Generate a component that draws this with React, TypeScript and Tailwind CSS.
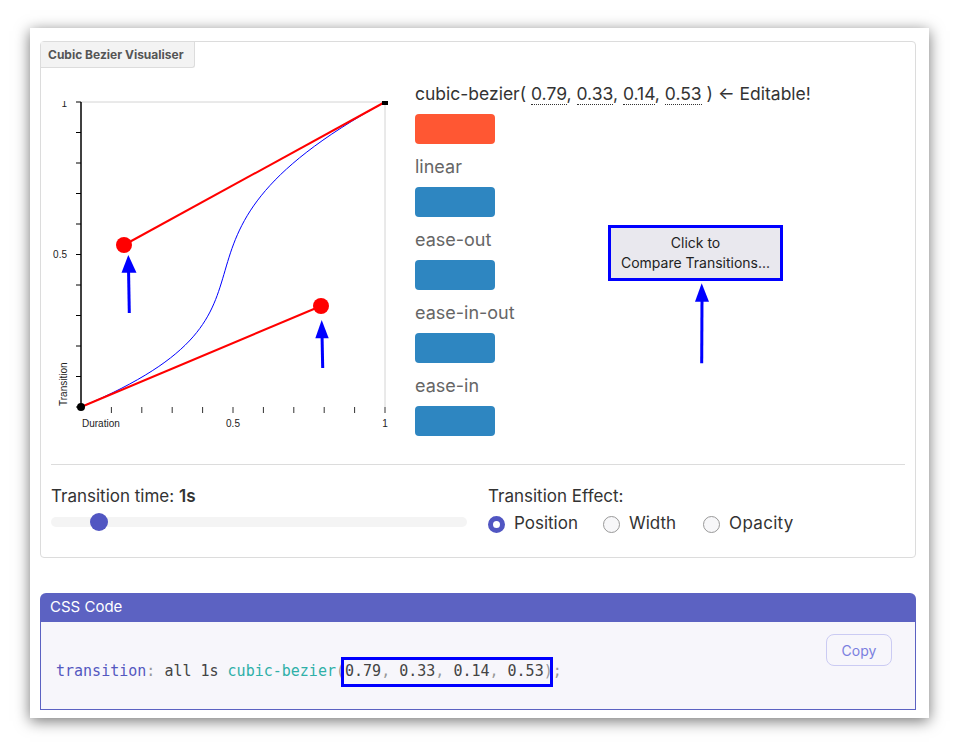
import React from "react";

const sans = { fontFamily: "Inter, 'Open Sans', sans-serif" };

const vals = ["0.79", "0.33", "0.14", "0.53"];
const easings = ["linear", "ease-out", "ease-in-out", "ease-in"];

function Chart() {
    // drawn in page coordinates, shifted back by the svg's own offset
    const yTicks = Array.from({ length: 11 }, (_, i) => 102 + i * 30.5);
    const xTicks = Array.from({ length: 10 }, (_, i) => 81 + (i + 1) * 30.4);
    return (
        <svg width="359" height="340" className="block" style={{ fontFamily: "'Liberation Sans', Arial, sans-serif" }}>
            <g transform="translate(-41,-101)">
                <line x1="81" y1="102" x2="385" y2="102" stroke="#d4d4d4" />
                <line x1="385" y1="102" x2="385" y2="407" stroke="#d4d4d4" />
                <line x1="81" y1="102" x2="81" y2="407" stroke="#000" strokeWidth="1.5" />
                {yTicks.map((y) => (
                    <line key={y} x1="76" y1={y} x2="81" y2={y} stroke="#000" />
                ))}
                {xTicks.map((x) => (
                    <line key={x} x1={x} y1="407" x2={x} y2="413" stroke="#333" />
                ))}
                <text x="67" y="107" fontSize="10" textAnchor="end" fill="#222">1</text>
                <text x="67" y="258" fontSize="10" textAnchor="end" fill="#222">0.5</text>
                <text x="82" y="427" fontSize="10" fill="#222">Duration</text>
                <text x="233" y="427" fontSize="10" textAnchor="middle" fill="#222">0.5</text>
                <text x="385" y="427" fontSize="10" textAnchor="middle" fill="#222">1</text>
                <text transform="translate(67,406) rotate(-90)" fontSize="10" fill="#222">Transition</text>

                <path d="M81,407 C321,306 124,245 385,102" fill="none" stroke="#0000ff" strokeWidth="1" />
                <line x1="81" y1="407" x2="321" y2="306" stroke="#ff0000" strokeWidth="2" />
                <line x1="124" y1="245" x2="385" y2="102" stroke="#ff0000" strokeWidth="2" />
                <circle cx="81" cy="407" r="4" fill="#000" />
                <rect x="382" y="99" width="6" height="6" fill="#000" />
                <circle cx="124" cy="245" r="8" fill="#ff0000" />
                <circle cx="321" cy="306" r="8" fill="#ff0000" />

                {/* annotation arrows */}
                <line x1="129.3" y1="313" x2="128.5" y2="268" stroke="#0000ff" strokeWidth="3" />
                <polygon points="128.3,255 121.5,272.7 136.5,272.7" fill="#0000ff" />
                <line x1="322.7" y1="368" x2="322" y2="334" stroke="#0000ff" strokeWidth="3" />
                <polygon points="321.7,320 315.3,338.3 328.7,338.3" fill="#0000ff" />
            </g>
        </svg>
    );
}

export default function App() {
    return (
        <div className="min-h-[751px] bg-white pt-[28px] pl-[30px]" style={sans}>
            <div className="relative w-[899px] h-[690px] bg-white px-[10px] pt-[13px] shadow-[0_3px_14px_rgba(0,0,0,0.55)]">
                {/* visualiser card */}
                <div className="flex flex-col w-[876px] h-[517px] border border-[#dcdcdc] rounded-[4px]">
                    <div className="w-[154px] h-[26px] flex items-center pl-[7px] bg-[#f3f3f3] border-r border-b border-[#dcdcdc] rounded-br-[3px] text-[12px] font-bold text-[#555]">
                        Cubic Bezier Visualiser
                    </div>
                    <div className="flex h-[396px]">
                        <div className="mt-[33px]">
                            <Chart />
                        </div>
                        <div className="ml-[15px] pt-[12px] flex-1">
                            <div className="text-[17.5px] leading-[27px] text-[#333] whitespace-nowrap">
                                cubic-bezier({" "}
                                {vals.map((v, i) => (
                                    <span key={v}>
                                        <span className="border-b border-dotted border-[#333]">{v}</span>
                                        {i < 3 ? ", " : " "}
                                    </span>
                                ))}
                                ) ← Editable!
                            </div>
                            <div className="flex">
                                <div className="w-[193px]">
                                    <div className="mt-[7px] w-[80px] h-[30px] rounded-[4px] bg-[#ff5733]" />
                                    {easings.map((e) => (
                                        <div key={e}>
                                            <div className="mt-[9px] mb-[7px] text-[18px] leading-[27px] text-[#666]">{e}</div>
                                            <div className="w-[80px] h-[30px] rounded-[4px] bg-[#2e86c1]" />
                                        </div>
                                    ))}
                                </div>
                                <div className="mt-[118px]">
                                    <button className="w-[175px] h-[56px] border-[3px] border-[#0000ff] bg-[#e9e8ee] text-[14px] leading-[20px] text-[#222]">
                                        Click to
                                        <br />
                                        Compare Transitions...
                                    </button>
                                </div>
                            </div>
                        </div>
                    </div>
                    <div className="mx-[10px] border-t border-[#dcdcdc]" />
                    <div className="flex px-[10px] pt-[18px] gap-[21px]">
                        <div className="w-[416px]">
                            <div className="text-[17px] leading-[26px] text-[#333]">
                                Transition time: <b className="font-semibold">1s</b>
                            </div>
                            <div className="relative mt-[8px] h-[10px] rounded-full bg-[#f4f4f4]">
                                <div className="absolute left-[39px] top-[-4px] w-[18px] h-[18px] rounded-full bg-[#5156c2]" />
                            </div>
                        </div>
                        <div>
                            <div className="text-[17px] leading-[26px] text-[#333]">Transition Effect:</div>
                            <div className="mt-[4px] flex items-center h-[22px] text-[17px] text-[#333]">
                                <span className="w-[17px] h-[17px] rounded-full border-[5px] border-[#5156c2] bg-white" />
                                <span className="ml-[9px]">Position</span>
                                <span className="ml-[25px] w-[17px] h-[17px] rounded-full border border-[#999] bg-[#f7f7f9]" />
                                <span className="ml-[9px]">Width</span>
                                <span className="ml-[27px] w-[17px] h-[17px] rounded-full border border-[#999] bg-[#f7f7f9]" />
                                <span className="ml-[9px] tracking-[0.3px]">Opacity</span>
                            </div>
                        </div>
                    </div>
                </div>

                {/* css code panel */}
                <div className="mt-[35px] w-[876px]">
                    <div className="h-[29px] flex items-center px-[10px] bg-[#5c62c2] rounded-t-[6px] text-[15px] text-white">
                        CSS Code
                    </div>
                    <div className="relative h-[88px] bg-[#f7f6fb] border border-t-0 border-[#5c62c2]">
                        <div className="absolute left-[15px] top-[39px] leading-[20px] text-[15px] whitespace-pre" style={{ fontFamily: "'DejaVu Sans Mono', monospace" }}>
                            <span className="text-[#5458c0]">transition</span>
                            <span className="text-[#999]">: </span>
                            <span className="text-[#444]">all 1s </span>
                            <span className="text-[#2fb0a8]">cubic-bezier</span>
                            <span className="text-[#999]">(</span>
                            <span className="text-[#444]">0.79</span>
                            <span className="text-[#999]">, </span>
                            <span className="text-[#444]">0.33</span>
                            <span className="text-[#999]">, </span>
                            <span className="text-[#444]">0.14</span>
                            <span className="text-[#999]">, </span>
                            <span className="text-[#444]">0.53</span>
                            <span className="text-[#999]">);</span>
                            <span className="absolute left-[285px] top-[-4px] w-[212px] h-[30px] border-[3px] border-[#0000ff]" />
                        </div>
                        <button className="absolute right-[23px] top-[12px] w-[66px] h-[32px] rounded-[8px] border border-[#cbcbf3] text-[14px] text-[#7b7fe0]">
                            Copy
                        </button>
                    </div>
                </div>

                {/* arrow pointing at the compare button */}
                <svg className="absolute left-[630px] top-[250px]" width="60" height="90">
                    <line x1="41.7" y1="85.3" x2="42" y2="20" stroke="#0000ff" strokeWidth="3" />
                    <polygon points="41.7,5.3 35,23.7 49,23.7" fill="#0000ff" />
                </svg>
            </div>
        </div>
    );
}
